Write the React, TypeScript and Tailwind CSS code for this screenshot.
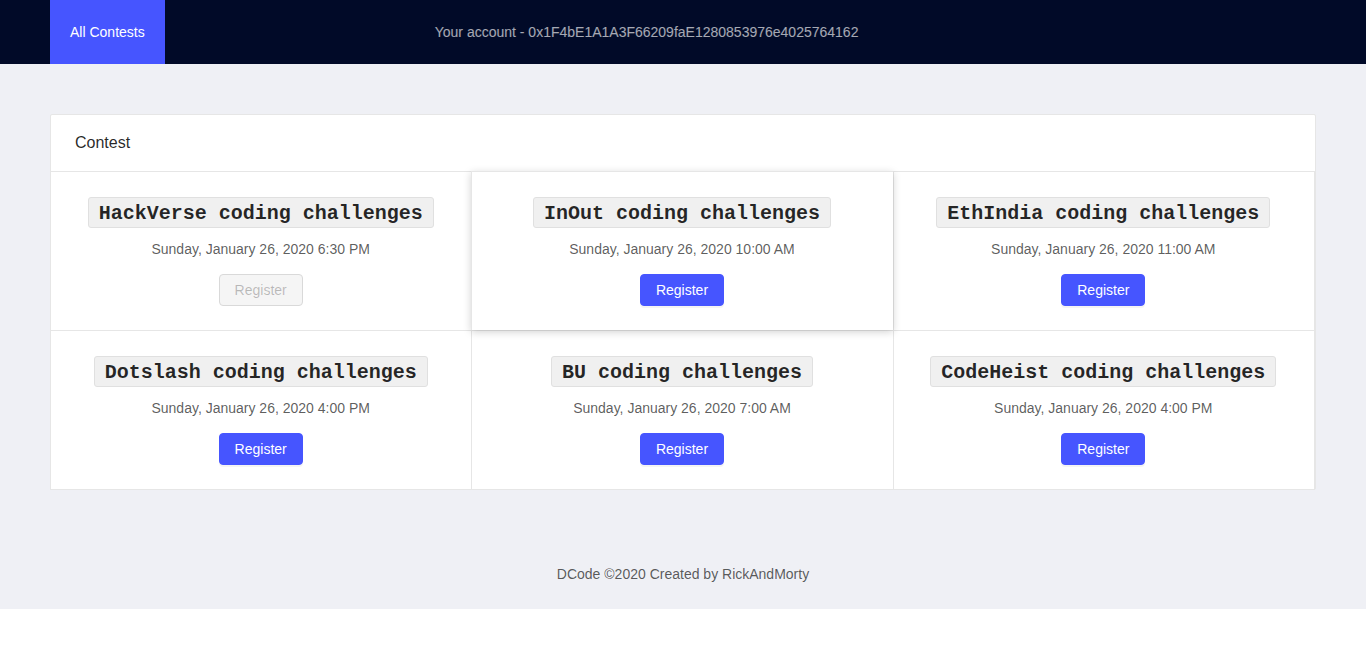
type Contest = { name: string; date: string; closed?: boolean; raised?: boolean };

const contests: Contest[] = [
  { name: 'HackVerse coding challenges', date: 'Sunday, January 26, 2020 6:30 PM', closed: true },
  { name: 'InOut coding challenges', date: 'Sunday, January 26, 2020 10:00 AM', raised: true },
  { name: 'EthIndia coding challenges', date: 'Sunday, January 26, 2020 11:00 AM' },
  { name: 'Dotslash coding challenges', date: 'Sunday, January 26, 2020 4:00 PM' },
  { name: 'BU coding challenges', date: 'Sunday, January 26, 2020 7:00 AM' },
  { name: 'CodeHeist coding challenges', date: 'Sunday, January 26, 2020 4:00 PM' },
];

function ContestCell({ name, date, closed, raised }: Contest) {
  return (
    <li
      className={`flex flex-col items-center bg-white pt-[26px] pb-6 ${
        raised
          ? 'relative z-10 shadow-[inset_1px_0_0_0_#e6e6e6,inset_0_1px_0_0_#e6e6e6,0_2px_8px_rgba(0,0,0,0.18)]'
          : 'shadow-[1px_0_0_0_#e6e6e6,0_1px_0_0_#e6e6e6,1px_1px_0_0_#e6e6e6,inset_1px_0_0_0_#e6e6e6,inset_0_1px_0_0_#e6e6e6]'
      }`}
    >
      <h2>
        <code className="block h-[31px] rounded-[3px] border border-[#e0e0e0] bg-[#f0f0f0] px-2.5 font-['Liberation_Mono',monospace] text-[20px] leading-[31px] font-bold whitespace-nowrap text-black/85">
          {name}
        </code>
      </h2>
      <p className="mt-[11px]">{date}</p>
      <button
        type="button"
        disabled={closed}
        className={`mt-[14px] h-8 rounded border px-[15px] ${
          closed
            ? 'cursor-not-allowed border-[#d9d9d9] bg-[#f5f5f5] text-black/25'
            : 'border-[#4655ff] bg-[#4655ff] text-white shadow-[0_2px_0_rgba(0,0,0,0.045)]'
        }`}
      >
        Register
      </button>
    </li>
  );
}

export default function App() {
  return (
    <div className="bg-[#eff0f5] font-['Liberation_Sans',Arial,sans-serif] text-[14px] leading-[21px] text-black/65">
      <header className="flex h-16 items-center bg-[#010a28] px-[50px]">
        <nav className="flex h-full">
          <a href="#contests" className="flex h-full items-center bg-[#4655ff] px-5 text-white">
            All Contests
          </a>
        </nav>
        <p className="ml-[270px] text-white/65">
          Your account - 0x1F4bE1A1A3F66209faE1280853976e4025764162
        </p>
      </header>
      <main id="contests" className="p-[50px]">
        <section className="rounded-xs border border-[#e6e6e6] bg-white">
          <h1 className="border-b border-[#e6e6e6] px-6 py-4 text-[16px] leading-6 text-black/85">Contest</h1>
          <ul className="-mt-px mr-px -ml-px grid grid-cols-3">
            {contests.map((contest) => (
              <ContestCell key={contest.name} {...contest} />
            ))}
          </ul>
        </section>
      </main>
      <footer className="px-[50px] py-6 text-center">DCode ©2020 Created by RickAndMorty</footer>
    </div>
  );
}
